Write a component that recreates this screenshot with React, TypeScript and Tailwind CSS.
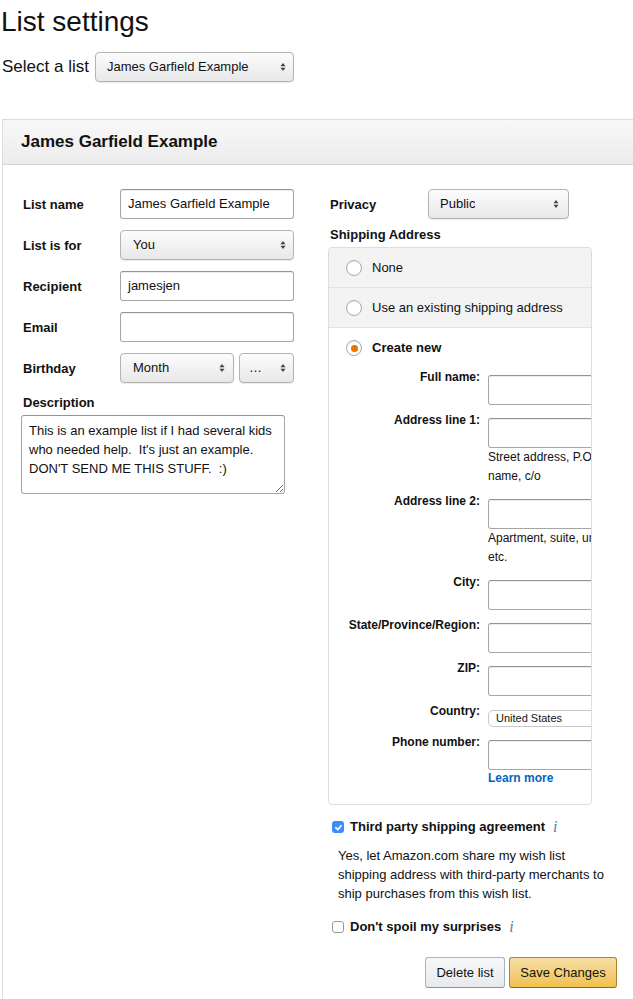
import React from 'react';

// native-looking up/down arrows of a mac select
const Arrows = () => (
  <svg width="6" height="10" viewBox="0 0 6 10" className="shrink-0">
    <path d="M3 1 L5.5 4.2 L0.5 4.2 Z" fill="#444" />
    <path d="M3 9 L5.5 5.8 L0.5 5.8 Z" fill="#444" />
  </svg>
);

const Select: React.FC<{ value: string; className?: string }> = ({ value, className = '' }) => (
  <div
    className={`flex items-center justify-between rounded-[4px] border border-[#b3b3b3] bg-linear-to-b from-[#fcfcfc] to-[#e8e8e8] shadow-[0_1px_1px_rgba(0,0,0,0.08)] text-[13px] text-[#111] ${className}`}
  >
    <span className="truncate">{value}</span>
    <Arrows />
  </div>
);

const Input: React.FC<{ value?: string; className?: string }> = ({ value = '', className = '' }) => (
  <div
    className={`flex items-center rounded-[3px] border border-[#a6a6a6] border-t-[#949494] bg-white pl-[7px] text-[13px] text-[#111] shadow-[inset_0_1px_0_rgba(0,0,0,0.07)] ${className}`}
  >
    {value}
  </div>
);

const Radio: React.FC<{ checked?: boolean }> = ({ checked }) => (
  <span className="flex h-[16px] w-[16px] shrink-0 items-center justify-center rounded-full border border-[#a9a9a9] bg-white shadow-[inset_0_1px_1px_rgba(0,0,0,0.08)]">
    {checked && <span className="h-[7px] w-[7px] rounded-full bg-[#e77600]" />}
  </span>
);

const Check: React.FC<{ checked?: boolean }> = ({ checked }) =>
  checked ? (
    <span className="flex h-[12px] w-[12px] shrink-0 items-center justify-center rounded-[3px] bg-[#3a8ef6]">
      <svg width="9" height="9" viewBox="0 0 10 10">
        <path d="M2 5.2 L4.2 7.4 L8 2.8" fill="none" stroke="white" strokeWidth="1.8" strokeLinecap="round" strokeLinejoin="round" />
      </svg>
    </span>
  ) : (
    <span className="h-[12px] w-[12px] shrink-0 rounded-[3px] border border-[#9a9a9a] bg-white" />
  );

const Info = () => (
  <span className="font-['Liberation_Serif',serif] text-[16px] italic leading-[16px] text-[#5a80b8]">i</span>
);

const LeftRow: React.FC<{ label: string; children: React.ReactNode }> = ({ label, children }) => (
  <div className="flex h-[30px] items-center">
    <span className="w-[98px] pl-[1px] pt-[1px] text-[13px] font-bold">{label}</span>
    {children}
  </div>
);

const Field: React.FC<{ label: string; children?: React.ReactNode; hint?: string; pt?: string }> = ({
  label,
  children,
  hint,
  pt = 'pt-[7px]',
}) => (
  <div className="flex items-start">
    <span className="w-[151px] shrink-0 pt-[1px] text-right text-[12px] font-bold leading-[16px]">{label}</span>
    <div className={`ml-[8px] w-[230px] shrink-0 ${pt}`}>
      {children ?? <Input className="h-[30px] w-[230px]" />}
      {hint && <p className="w-[205px] text-[12px] leading-[19px]">{hint}</p>}
    </div>
  </div>
);

export default function App() {
  return (
    <div className="w-[633px] overflow-hidden bg-white font-['Liberation_Sans',Arial,sans-serif] text-[#111]">
      {/* Page header */}
      <h1 className="pl-[1px] pt-[6px] text-[28px] font-normal leading-[32px]">List settings</h1>
      <div className="mt-[14px] flex items-center gap-[6px] pl-[2px]">
        <span className="text-[17px] leading-[20px]">Select a list</span>
        <Select value="James Garfield Example" className="h-[30px] w-[199px] pl-[11px] pr-[7px]" />
      </div>

      {/* Panel */}
      <div className="ml-[2px] mt-[37px] w-[720px] border-l border-t border-[#dddddd] pb-[40px]">
        <div className="flex h-[45px] items-center border-b border-[#d6d6d6] bg-linear-to-b from-[#f8f8f8] to-[#ececec] pl-[18px] text-[17px] font-bold">
          James Garfield Example
        </div>

        <div className="flex pl-[19px] pt-[24px]">
          {/* Left column */}
          <div className="w-[307px]">
            <div className="flex flex-col gap-[11px]">
              <LeftRow label="List name">
                <Input value="James Garfield Example" className="h-[30px] w-[174px]" />
              </LeftRow>
              <LeftRow label="List is for">
                <Select value="You" className="h-[30px] w-[174px] pl-[12px] pr-[7px]" />
              </LeftRow>
              <LeftRow label="Recipient">
                <Input value="jamesjen" className="h-[30px] w-[174px]" />
              </LeftRow>
              <LeftRow label="Email">
                <Input className="h-[30px] w-[174px]" />
              </LeftRow>
              <LeftRow label="Birthday">
                <div className="flex gap-[5px]">
                  <Select value="Month" className="h-[30px] w-[114px] pl-[12px] pr-[8px]" />
                  <Select value="…" className="h-[30px] w-[55px] pl-[9px] pr-[7px]" />
                </div>
              </LeftRow>
            </div>
            <p className="mt-[12px] pl-[1px] text-[13px] font-bold leading-[16px]">Description</p>
            <textarea
              readOnly
              defaultValue={"This is an example list if I had several kids who needed help.  It's just an example.  DON'T SEND ME THIS STUFF.  :)"}
              className="-ml-[1px] mt-[4px] block h-[79px] w-[264px] whitespace-pre-wrap rounded-[3px] border border-[#a6a6a6] border-t-[#949494] px-[7px] pt-[5px] text-[13px] leading-[19px] text-[#111] outline-none"
            />
          </div>

          {/* Right column */}
          <div className="w-[288px]">
            <div className="flex h-[30px] items-center">
              <span className="w-[99px] pl-[1px] pt-[1px] text-[13px] font-bold">Privacy</span>
              <Select value="Public" className="h-[30px] w-[141px] pl-[11px] pr-[9px]" />
            </div>
            <p className="mt-[8px] pl-[1px] text-[13px] font-bold leading-[16px]">Shipping Address</p>

            <div className="-ml-[1px] mt-[4px] w-[264px] overflow-hidden rounded-[4px] border border-[#dddddd]">
              <div className="flex h-[40px] items-center gap-[10px] border-b border-[#e3e3e3] bg-[#f3f3f3] pl-[17px] text-[13px]">
                <Radio />
                None
              </div>
              <div className="flex h-[40px] items-center gap-[10px] border-b border-[#e3e3e3] bg-[#f3f3f3] pl-[17px] text-[13px]">
                <Radio />
                Use an existing shipping address
              </div>
              <div className="flex h-[40px] items-center gap-[10px] pl-[17px] text-[13px] font-bold">
                <Radio checked />
                Create new
              </div>

              <div className="flex flex-col gap-[6px] pb-[18px]">
                <Field label="Full name:" />
                <Field label="Address line 1:" hint="Street address, P.O. box, company name, c/o" />
                <Field label="Address line 2:" hint="Apartment, suite, unit, building, floor, etc." />
                <Field label="City:" />
                <Field label="State/Province/Region:" />
                <Field label="ZIP:" />
                <Field label="Country:" pt="pt-[8px]">
                  <div className="flex h-[17px] w-[230px] items-center rounded-[5px] border border-[#c8c8c8] bg-white pl-[7px] text-[11px]">
                    United States
                  </div>
                </Field>
                <Field label="Phone number:">
                  <Input className="h-[30px] w-[230px]" />
                  <p className="text-[12px] font-bold leading-[16px] text-[#0066c0]">Learn more</p>
                </Field>
              </div>
            </div>

            <div className="ml-[3px] mt-[13px] flex h-[18px] items-center gap-[6px]">
              <Check checked />
              <span className="text-[13px] font-bold">Third party shipping agreement</span>
              <span className="ml-[2px]">
                <Info />
              </span>
            </div>
            <p className="mt-[10px] w-[275px] pl-[9px] text-[13px] leading-[19px]">
              Yes, let Amazon.com share my wish list shipping address with third-party merchants to ship purchases from
              this wish list.
            </p>
            <div className="ml-[3px] mt-[15px] flex h-[18px] items-center gap-[6px]">
              <Check />
              <span className="text-[13px] font-bold">Don't spoil my surprises</span>
              <span className="ml-[2px]">
                <Info />
              </span>
            </div>

            <div className="mt-[21px] flex justify-end gap-[4px]">
              <button className="h-[31px] w-[80px] rounded-[3px] border border-[#adb1b8] border-b-[#8d9096] bg-linear-to-b from-[#f7f8fa] to-[#e7e9ec] text-[13px] text-[#111]">
                Delete list
              </button>
              <button className="h-[31px] w-[108px] rounded-[3px] border border-[#a88734] border-b-[#846a29] bg-linear-to-b from-[#f7dfa5] to-[#f0c14b] text-[13px] text-[#111]">
                Save Changes
              </button>
            </div>
          </div>
        </div>
      </div>
    </div>
  );
}
